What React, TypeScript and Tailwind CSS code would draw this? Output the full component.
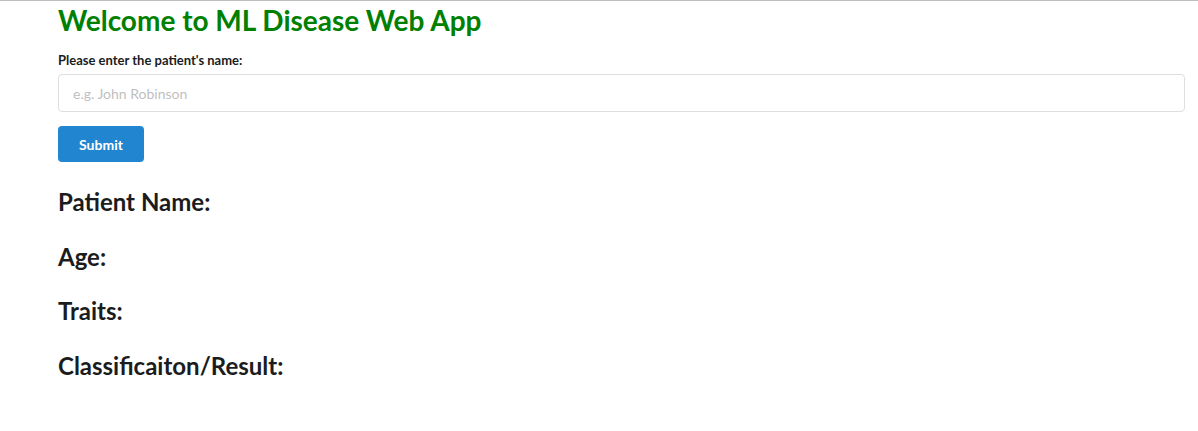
export default function App() {
  const results = ['Patient Name:', 'Age:', 'Traits:', 'Classificaiton/Result:'];

  return (
    <div
      className="min-h-[431px] bg-white border-t border-[#bdbdbd] pl-[58px] pr-[13px] text-[#1b1c1d]"
      style={{ fontFamily: 'Lato, "Helvetica Neue", Arial, sans-serif' }}
    >
      <h1 className="text-[28px] leading-[36px] font-bold text-[#008000] pt-[1px]">
        Welcome to ML Disease Web App
      </h1>

      <form className="mt-[14px]" onSubmit={(e) => e.preventDefault()}>
        <label className="block text-[13px] leading-[16px] font-bold mb-[6px]">
          Please enter the patient's name:
        </label>
        <input
          type="text"
          placeholder="e.g. John Robinson"
          className="block w-full h-[38px] px-[14px] text-[14px] border border-[#dededf] rounded-[4px] placeholder:text-[#bfbfbf] outline-none"
        />
        <button
          type="submit"
          className="mt-[14px] h-[36px] w-[86px] rounded-[4px] bg-[#2185d0] text-white text-[14px] font-bold"
        >
          Submit
        </button>
      </form>

      <div className="mt-[26px] flex flex-col gap-[26.5px]">
        {results.map((label) => (
          <h2 key={label} className="text-[24px] leading-[28px] font-bold">
            {label}
          </h2>
        ))}
      </div>
    </div>
  );
}
